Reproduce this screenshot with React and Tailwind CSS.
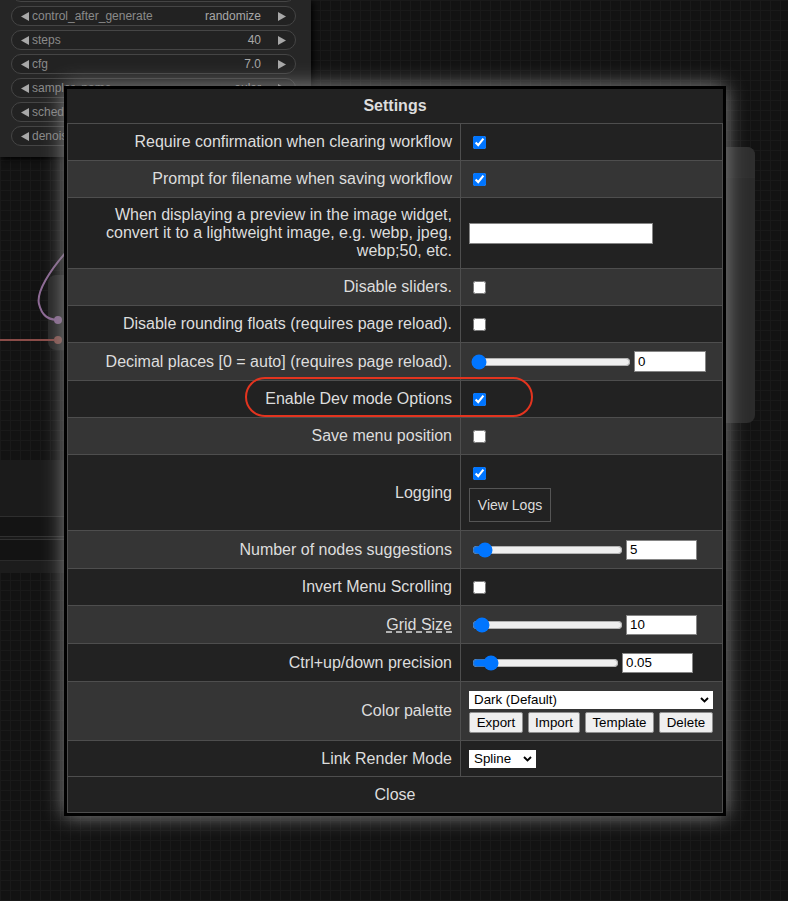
import React from 'react';

const widgets = [
  { label: '', value: '' },
  { label: 'control_after_generate', value: 'randomize' },
  { label: 'steps', value: '40' },
  { label: 'cfg', value: '7.0' },
  { label: 'sampler_name', value: 'euler' },
  { label: 'scheduler', value: '' },
  { label: 'denoise', value: '' },
];

function Arrow({ dir }) {
  return (
    <svg width="8" height="9" viewBox="0 0 8 9" className="shrink-0">
      <path d={dir === 'left' ? 'M8 0L0 4.5 8 9z' : 'M0 0l8 4.5L0 9z'} fill="#a8a8a8" />
    </svg>
  );
}

function Widget({ label, value }) {
  return (
    <div className="flex h-[20px] w-[285px] items-center rounded-full border border-[#454545] bg-[#222] px-[9px] text-[12px] leading-none">
      {label && <Arrow dir="left" />}
      <span className="ml-[3px] flex-1 text-[#8a8a8a]">{label}</span>
      <span className="mr-[17px] text-[#a8a8a8]">{value}</span>
      {label && <Arrow dir="right" />}
    </div>
  );
}

function Row({ light, h, label, children, valueClass = 'items-center' }) {
  return (
    <div className={`flex border-t border-[#4e4e4e] ${h} ${light ? 'bg-[#353535]' : 'bg-[#222]'}`}>
      <div className="flex w-[393px] shrink-0 items-center justify-end border-r border-[#4e4e4e] pr-[8px] text-right text-[16px] leading-[18px]">
        {label}
      </div>
      <div className={`flex flex-1 pl-[8px] ${valueClass}`}>{children}</div>
    </div>
  );
}

function Check({ on }) {
  return <input type="checkbox" defaultChecked={on} className="ml-[4px] h-[13px] w-[13px]" />;
}

function Num({ value, w, h }) {
  return (
    <input
      type="number"
      defaultValue={value}
      className={`ml-[3px] ${w} ${h} border border-[#858585] bg-white px-[3px] text-[13.33px] text-black`}
    />
  );
}

// dropdown drawn as a box so the text sits where the reference has it
function Dropdown({ value, w }) {
  return (
    <div className={`relative flex h-[18px] ${w} items-center bg-white pl-[5px] text-[13.33px] leading-none text-black`}>
      {value}
      <svg viewBox="0 0 9 6" className="pointer-events-none absolute right-[4px] top-[6px] h-[6px] w-[9px]">
        <path d="M1 1l3.5 3.5L8 1" stroke="#000" strokeWidth="1.9" fill="none" />
      </svg>
    </div>
  );
}

export default function App() {
  return (
    <div className="relative h-[901px] w-[788px] overflow-hidden bg-[#121212] bg-[linear-gradient(#191919_1px,transparent_1px),linear-gradient(90deg,#191919_1px,transparent_1px)] [background-size:10px_10px] font-['Liberation_Sans',Arial,sans-serif]">
      {/* canvas: sampler node top-left */}
      <div className="absolute left-0 top-0 h-[157px] w-[311px] bg-[#262626] shadow-[2px_2px_6px_#000]">
        <div className="mt-[-18px] ml-[11px] flex flex-col gap-[4px]">
          {widgets.map((w, i) => (
            <Widget key={i} label={w.label} value={w.value} />
          ))}
        </div>
      </div>

      {/* canvas: node on the left with links */}
      <div className="absolute left-[48px] top-[275px] h-[75px] w-[40px] rounded-l-[8px] bg-[#262626]" />
      <svg className="absolute left-0 top-[240px]" width="80" height="120" viewBox="0 0 80 120">
        <path d="M68 10 C50 30, 36 52, 39 64 S48 79, 56 80" stroke="#8e6b96" strokeWidth="2" fill="none" />
        <path d="M0 100 H54" stroke="#8a4c48" strokeWidth="2" />
        <circle cx="58" cy="80" r="4" fill="#8e6b96" />
        <circle cx="58" cy="100" r="4" fill="#8a5550" />
      </svg>

      {/* canvas: panel lower left */}
      <div className="absolute left-0 top-[460px] flex w-[80px] flex-col">
        <div className="h-[56px] bg-[#1b1b1b]" />
        <div className="h-[20px] border-t border-[#2e2e2e] bg-[#141414]" />
        <div className="h-[4px] border-y border-[#303030] bg-[#1a1a1a]" />
        <div className="h-[20px] bg-[#131313]" />
        <div className="h-[13px] border-t border-[#2a2a2a] bg-[#1c1c1c]" />
      </div>

      {/* canvas: node on the right */}
      <div className="absolute left-[680px] top-[147px] h-[276px] w-[75px] rounded-[8px] bg-[#2b2b2b]">
        <div className="h-[31px] rounded-t-[8px] border-b border-[#2f2f2f] bg-[#2e2e2e]" />
      </div>

      {/* settings dialog */}
      <div className="absolute left-[64px] top-[86px] w-[662px] border-[3px] border-black bg-[#222] text-[#ddd] shadow-[0_0_20px_#888888]">
        <div className="flex h-[34px] items-center justify-center text-[16px] font-bold">Settings</div>

        <div className="border-x border-b border-[#4e4e4e]">
          <Row h="h-[37px]" label="Require confirmation when clearing workflow">
            <Check on />
          </Row>
          <Row light h="h-[37px]" label="Prompt for filename when saving workflow">
            <Check on />
          </Row>
          <Row
            h="h-[71px]"
            label={
              <span>
                When displaying a preview in the image widget,
                <br />
                convert it to a lightweight image, e.g. webp, jpeg,
                <br />
                webp;50, etc.
              </span>
            }
          >
            <input type="text" className="h-[21px] w-[184px] border border-[#858585] bg-white px-[3px] text-[13.33px] text-black" />
          </Row>
          <Row light h="h-[37px]" label="Disable sliders.">
            <Check />
          </Row>
          <Row h="h-[37px]" label="Disable rounding floats (requires page reload).">
            <Check />
          </Row>
          <Row light h="h-[38px]" label="Decimal places [0 = auto] (requires page reload).">
            <input type="range" min="0" max="10" step="1" defaultValue="0" className="ml-[2px] w-[160px]" />
            <Num value="0" w="w-[72px]" h="h-[21px]" />
          </Row>
          <Row h="h-[37px]" label="Enable Dev mode Options">
            <Check on />
          </Row>
          <Row light h="h-[37px]" label="Save menu position">
            <Check />
          </Row>
          <Row h="h-[76px]" label="Logging" valueClass="flex-col items-start pt-[12px]">
            <Check on />
            <button className="mt-[8px] h-[34px] w-[82px] border border-[#555] text-[14px] text-[#ddd]">View Logs</button>
          </Row>
          <Row light h="h-[38px]" label="Number of nodes suggestions">
            <input type="range" min="1" max="100" step="1" defaultValue="5" className="ml-[3px] w-[151px]" />
            <Num value="5" w="w-[71px]" h="h-[20px]" />
          </Row>
          <Row h="h-[37px]" label="Invert Menu Scrolling">
            <Check />
          </Row>
          <Row
            light
            h="h-[38px]"
            label={<span className="underline decoration-dashed underline-offset-2">Grid Size</span>}
          >
            <input type="range" min="1" max="500" step="1" defaultValue="10" className="ml-[3px] w-[151px]" />
            <Num value="10" w="w-[71px]" h="h-[20px]" />
          </Row>
          <Row h="h-[38px]" label="Ctrl+up/down precision">
            <input type="range" min="0" max="0.6" step="0.01" defaultValue="0.05" className="ml-[3px] w-[147px]" />
            <Num value="0.05" w="w-[71px]" h="h-[20px]" />
          </Row>
          <Row light h="h-[59px]" label="Color palette" valueClass="flex-col items-start pt-[9px]">
            <Dropdown value="Dark (Default)" w="w-[244px]" />
            <div className="mt-[3px] flex gap-[5px] text-[13.33px] text-black">
              <button className="h-[21px] w-[54px] rounded-[2px] border border-[#8f8f8f] bg-[#efefef]">Export</button>
              <button className="h-[21px] w-[52px] rounded-[2px] border border-[#8f8f8f] bg-[#efefef]">Import</button>
              <button className="h-[21px] w-[69px] rounded-[2px] border border-[#8f8f8f] bg-[#efefef]">Template</button>
              <button className="h-[21px] w-[54px] rounded-[2px] border border-[#8f8f8f] bg-[#efefef]">Delete</button>
            </div>
          </Row>
          <Row h="h-[36px]" label="Link Render Mode">
            <Dropdown value="Spline" w="w-[67px]" />
          </Row>
        </div>

        <button className="h-[36px] w-full border-x border-b border-[#4e4e4e] text-[16px] text-[#ddd]">Close</button>
      </div>

      {/* annotation */}
      <div className="pointer-events-none absolute left-[245px] top-[377px] h-[40px] w-[288px] rounded-full border-2 border-[#e3341f]" />
    </div>
  );
}
